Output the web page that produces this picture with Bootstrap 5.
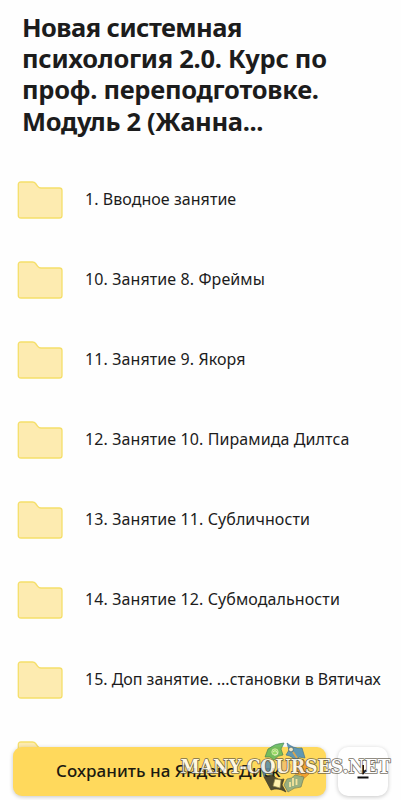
<!DOCTYPE html>
<html lang="ru">
<head>
    <meta charset="UTF-8">
    <title>Яндекс Диск</title>
    <meta name="viewport" content="width=device-width, initial-scale=1">
    <link href="https://cdn.jsdelivr.net/npm/bootstrap@5.3.2/dist/css/bootstrap.min.css" rel="stylesheet">

    <style>
        body {
            background-color: #fefefe;
            color: #1c1c1c;
            font-family: "Noto Sans", "Open Sans", sans-serif;
        }
        .screen {
            height: 800px;
        }
        .folder-title {
            font-size: 25.5px;
            line-height: 31.2px;
            font-weight: 700;
            letter-spacing: -.27px;
            padding: 12px 22px 0;
            height: 159px;
        }
        .folder-title span {
            display: block;
            width: max-content;
        }
        .folder-title span:first-child {
            letter-spacing: -.55px;
        }
        .folder-title span:last-child {
            letter-spacing: -.33px;
        }
        .folder-row {
            height: 80px;
            padding-left: 17px;
            gap: 22px;
            font-size: 16px;
            letter-spacing: .1px;
        }
        .folder-row span {
            white-space: nowrap;
        }
        .folder-row:first-child {
            letter-spacing: .05px;
        }
        .folder-row:nth-child(7) {
            letter-spacing: -.02px;
        }
        .folder-row svg {
            width: 46px;
            height: 38px;
            margin-top: 2px;
        }
        .bottom-bar {
            padding: 0 13px 4px;
            gap: 12px;
        }
        .save-btn {
            height: 49px;
            border-radius: 9px;
            background-color: #ffd95c;
            color: #1c1a10;
            font-size: 17px;
            font-weight: 500;
            letter-spacing: .05px;
            padding: 0 0 1px 43px;
            box-shadow: 0 1px 4px rgba(0, 0, 0, .22);
        }
        .download-btn {
            width: 50px;
            height: 49px;
            border-radius: 10px;
            background-color: #fff;
            box-shadow: 0 1px 4px rgba(0, 0, 0, .22);
        }
        .watermark {
            left: 170px;
            top: 735px;
            pointer-events: none;
        }
        .watermark text {
            font: 700 18px "DejaVu Serif", serif;
            fill: #fff;
            stroke: #5b5547;
            stroke-width: 1.7px;
            stroke-linejoin: round;
            paint-order: stroke;
            opacity: .82;
        }
    </style>
</head>
<body>

<svg class="d-none">
    <symbol id="folder" viewBox="0 0 46 38">
        <path d="M1.3 3.6Q1.3 1 3.9 1H15.5Q17.5 1 18.6 2.5L20.7 5.3Q22 7 24 7H42.4Q45 7 45 9.6V34.4Q45 37 42.4 37H3.9Q1.3 37 1.3 34.4Z" fill="#fdebb0" stroke="#f5df6a" stroke-width="1.3"/>
    </symbol>
</svg>

<div class="screen position-relative overflow-hidden">
    <h1 class="folder-title mb-0">
        <span>Новая системная</span>
        <span>психология 2.0. Курс по</span>
        <span>проф. переподготовке.</span>
        <span>Модуль 2 (Жанна...</span>
    </h1>

    <div class="folder-list">
        <div class="folder-row d-flex align-items-center"><svg><use href="#folder"/></svg><span>1. Вводное занятие</span></div>
        <div class="folder-row d-flex align-items-center"><svg><use href="#folder"/></svg><span>10. Занятие 8. Фреймы</span></div>
        <div class="folder-row d-flex align-items-center"><svg><use href="#folder"/></svg><span>11. Занятие 9. Якоря</span></div>
        <div class="folder-row d-flex align-items-center"><svg><use href="#folder"/></svg><span>12. Занятие 10. Пирамида Дилтса</span></div>
        <div class="folder-row d-flex align-items-center"><svg><use href="#folder"/></svg><span>13. Занятие 11. Субличности</span></div>
        <div class="folder-row d-flex align-items-center"><svg><use href="#folder"/></svg><span>14. Занятие 12. Субмодальности</span></div>
        <div class="folder-row d-flex align-items-center"><svg><use href="#folder"/></svg><span>15. Доп занятие. ...становки в Вятичах</span></div>
        <div class="folder-row d-flex align-items-center"><svg><use href="#folder"/></svg></div>
    </div>

    <div class="bottom-bar position-absolute bottom-0 start-0 w-100 d-flex">
        <button class="save-btn btn border-0 flex-grow-1 text-start text-nowrap">Сохранить на Яндекс Диск</button>
        <button class="download-btn btn border-0 p-0 d-flex align-items-center justify-content-center">
            <svg width="16" height="18" viewBox="0 0 16 18">
                <path d="M8 2V10M5 7.300 8 10.300 11 7.300M2.500 14.500H13.500" fill="none" stroke="#111" stroke-width="2"/>
            </svg>
        </button>
    </div>

    <svg class="watermark position-absolute" width="231" height="65" viewBox="170 735 231 65">
        <!-- wheel of coloured segments -->
        <g stroke-width=".7" opacity=".9">
            <path d="M265 757 268 749Q275 743 284 743L281 749 283 755Q278 755 274 760L270 757Z" fill="#65b95b" stroke="#397a54"/>
            <path d="M287 743Q293 749 302 748L305 758 299 757 296 762Q293 756 286 755L289 750Z" fill="#4e91bd" stroke="#35698b"/>
            <path d="M296 764 303 759 307 764Q306 770 309 774L301 781 302 775 295 774Q298 770 296 764Z" fill="#f39a2b" stroke="#c77b20"/>
            <path d="M262 762 267 760 271 764Q269 770 273 775L266 773 264 777Q261 771 262 762Z" fill="#5d8fa8" stroke="#416b78"/>
            <path d="M264 777 273 775Q278 781 284 779L282 785 286 792Q278 787 271 790Z" fill="#3e3d2c" stroke="#29291f"/>
            <path d="M287 779Q292 779 295 775L304 777 301 787Q294 787 288 792L284 785Z" fill="#8fac85" stroke="#61745c"/>
            <circle cx="275" cy="752" r="3.2" fill="#8edb68" stroke="#e5f1c9"/>
            <path d="M273 752Q275 749 277 752T274 755" fill="none" stroke="#f5f6dc"/>
            <circle cx="291" cy="749.5" r="2.4" fill="#f3ead0" stroke="#29516c"/>
            <path d="M293 752 297 758" stroke="#d9a14e" stroke-width="1.8"/>
            <path d="M275 779 281 780 280 788 273 786Z" fill="#fff4b8" stroke="#8f854a"/>
            <path d="M290 787V782M293 786V778M296.500 785V779" stroke="#f6e5a4" stroke-width="1.8"/>
            <path d="M279 764Q285 758 291 765L289 772H281Z" fill="#f4c06b" stroke="#e0a94f"/>
        </g>
        <text x="180.5" y="773" textLength="210" lengthAdjust="spacingAndGlyphs">MANY-COURSES.NET</text>
    </svg>
</div>

<script src="https://cdn.jsdelivr.net/npm/bootstrap@5.3.2/dist/js/bootstrap.bundle.min.js"></script>

</body>
</html>
